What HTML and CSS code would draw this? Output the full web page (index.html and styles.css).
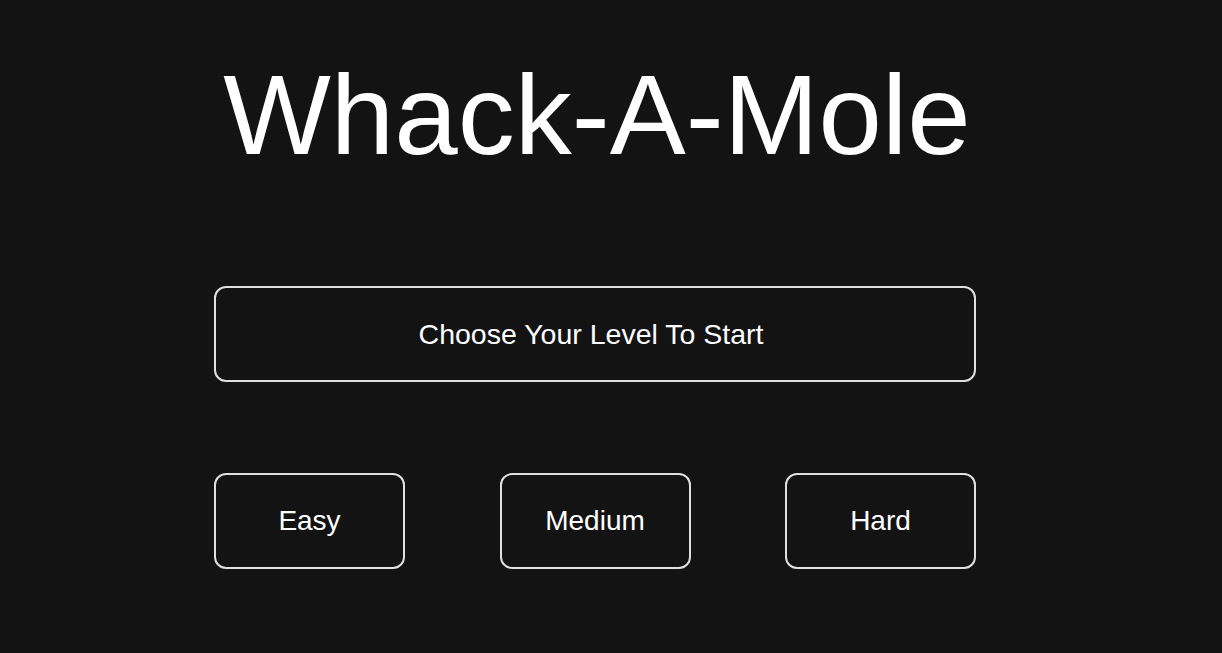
FILE: index.html
```html
<!DOCTYPE html>
<html lang="en">
<head>
<meta charset="utf-8">
<title>Whack-A-Mole</title>
<link rel="stylesheet" href="styles.css">
</head>
<body>
<main class="game">
  <h1 class="title">Whack-A-Mole</h1>
  <div class="status">Choose Your Level To Start</div>
  <div class="levels">
    <button class="level">Easy</button>
    <button class="level">Medium</button>
    <button class="level">Hard</button>
  </div>
</main>
</body>
</html>
```

FILE: styles.css
```css
html, body {
  margin: 0;
  padding: 0;
  background: #131313;
  height: 100%;
}
body {
  font-family: "Liberation Sans", Arial, sans-serif;
  color: #ffffff;
}
.game {
  width: 762px;
  margin-left: 214px;
  padding-top: 50px;
  display: flex;
  flex-direction: column;
}
.title {
  margin: 0;
  padding-left: 4px;
  font-size: 114px;
  font-weight: 400;
  line-height: 130px;
  text-align: center;
  letter-spacing: 0;
}
.status {
  margin-top: 106px;
  height: 96px;
  box-sizing: border-box;
  border: 2px solid #e0e0e0;
  border-radius: 12px;
  display: flex;
  align-items: center;
  justify-content: center;
  padding-right: 8px;
  font-size: 28.5px;
}
.levels {
  margin-top: 91px;
  display: flex;
  justify-content: space-between;
}
.level {
  width: 191px;
  height: 96px;
  box-sizing: border-box;
  background: transparent;
  border: 2px solid #e0e0e0;
  border-radius: 12px;
  color: #ffffff;
  font-family: "Liberation Sans", Arial, sans-serif;
  font-size: 28px;
  padding: 0;
}
```
